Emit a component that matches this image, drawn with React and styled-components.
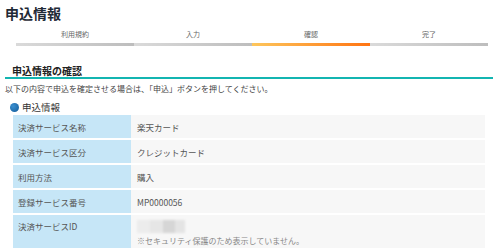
import { Fragment } from "react";
import styled, { createGlobalStyle } from "styled-components";

const GlobalStyle = createGlobalStyle`
  body {
    margin: 0;
    background: #fff;
    font-family: "Noto Sans CJK JP", "Noto Sans", sans-serif;
  }
`;

const Page = styled.div`
  padding: 0 7px 0 5px;
  overflow: hidden;
  height: 248px;
`;

const Title = styled.h1`
  margin: 0;
  padding-top: 5px;
  font-size: 14px;
  line-height: 16px;
  font-weight: 700;
  color: #1f2a36;
`;

const Steps = styled.ol`
  display: flex;
  list-style: none;
  margin: 8px 5px 0 11px;
  padding: 0;
`;

const Step = styled.li`
  flex: 1;
  text-align: center;
  font-size: 7px;
  line-height: 10px;
  color: #666;

  &::after {
    content: "";
    display: block;
    height: 3px;
    margin-top: 4px;
    background: ${(p) =>
      p.$current
        ? "linear-gradient(to right, #fdc65c, #ff7412)"
        : "linear-gradient(to right, #dadada, #bdbdbd)"};
  }
`;

const Heading = styled.h2`
  margin: 19px 0 0;
  padding-left: 7px;
  font-size: 10px;
  line-height: 12px;
  font-weight: 700;
  color: #222;
  border-bottom: 2px solid #13b5b1;
`;

const Lead = styled.p`
  margin: 5px 0 0;
  font-size: 8px;
  line-height: 10px;
  color: #444;
`;

const SubHeading = styled.h3`
  display: flex;
  align-items: center;
  gap: 3px;
  margin: 7px 0 0 5px;
  font-size: 9.5px;
  line-height: 12px;
  font-weight: 400;
  color: #333;

  &::before {
    content: "";
    width: 9px;
    height: 9px;
    border-radius: 50%;
    background: radial-gradient(circle at 35% 35%, #3a8fd0, #125a98);
  }
`;

const Table = styled.div`
  display: grid;
  grid-template-columns: 118px 1fr;
  row-gap: 2px;
  margin: 2px 0 0 8px;
  width: 472px;
`;

const Label = styled.div`
  background: #c6e6f7;
  padding: ${(p) => (p.$tall ? "5px 5px" : "0 5px")};
  height: ${(p) => (p.$tall ? "40px" : "23px")};
  display: flex;
  align-items: ${(p) => (p.$tall ? "flex-start" : "center")};
  font-size: 8.5px;
  color: #555;
  box-sizing: border-box;
`;

const Value = styled.div`
  background: #f7f7f7;
  padding: ${(p) => (p.$tall ? "5px 6px" : "0 6px")};
  height: ${(p) => (p.$tall ? "40px" : "23px")};
  display: flex;
  flex-direction: column;
  justify-content: ${(p) => (p.$tall ? "flex-start" : "center")};
  font-size: 8.5px;
  color: #555;
  box-sizing: border-box;
`;

const Masked = styled.div`
  display: flex;
  width: 48px;
  height: 13px;
  filter: blur(1px);
`;

const MaskBlock = styled.span`
  flex: ${(p) => p.$w};
  background: ${(p) => p.$c};
`;

const Note = styled.span`
  margin-top: 2px;
  font-size: 8px;
  color: #888;
`;

const rows = [
  ["決済サービス名称", "楽天カード"],
  ["決済サービス区分", "クレジットカード"],
  ["利用方法", "購入"],
  ["登録サービス番号", "MP0000056"],
];

const steps = ["利用規約", "入力", "確認", "完了"];

export default function App() {
  return (
    <>
      <GlobalStyle />
      <Page>
        <Title>申込情報</Title>
        <Steps>
          {steps.map((s) => (
            <Step key={s} $current={s === "確認"}>
              {s}
            </Step>
          ))}
        </Steps>
        <Heading>申込情報の確認</Heading>
        <Lead>以下の内容で申込を確定させる場合は、「申込」ボタンを押してください。</Lead>
        <SubHeading>申込情報</SubHeading>
        <Table>
          {rows.map(([k, v]) => (
            <Fragment key={k}>
              <Label>{k}</Label>
              <Value>{v}</Value>
            </Fragment>
          ))}
          <Label $tall>決済サービスID</Label>
          <Value $tall>
            <Masked>
              <MaskBlock $w={2} $c="#ececec" />
              <MaskBlock $w={2} $c="#e6e6e6" />
              <MaskBlock $w={2} $c="#d6d6d6" />
              <MaskBlock $w={1.5} $c="#e4e4e4" />
            </Masked>
            <Note>※セキュリティ保護のため表示していません。</Note>
          </Value>
        </Table>
      </Page>
    </>
  );
}
